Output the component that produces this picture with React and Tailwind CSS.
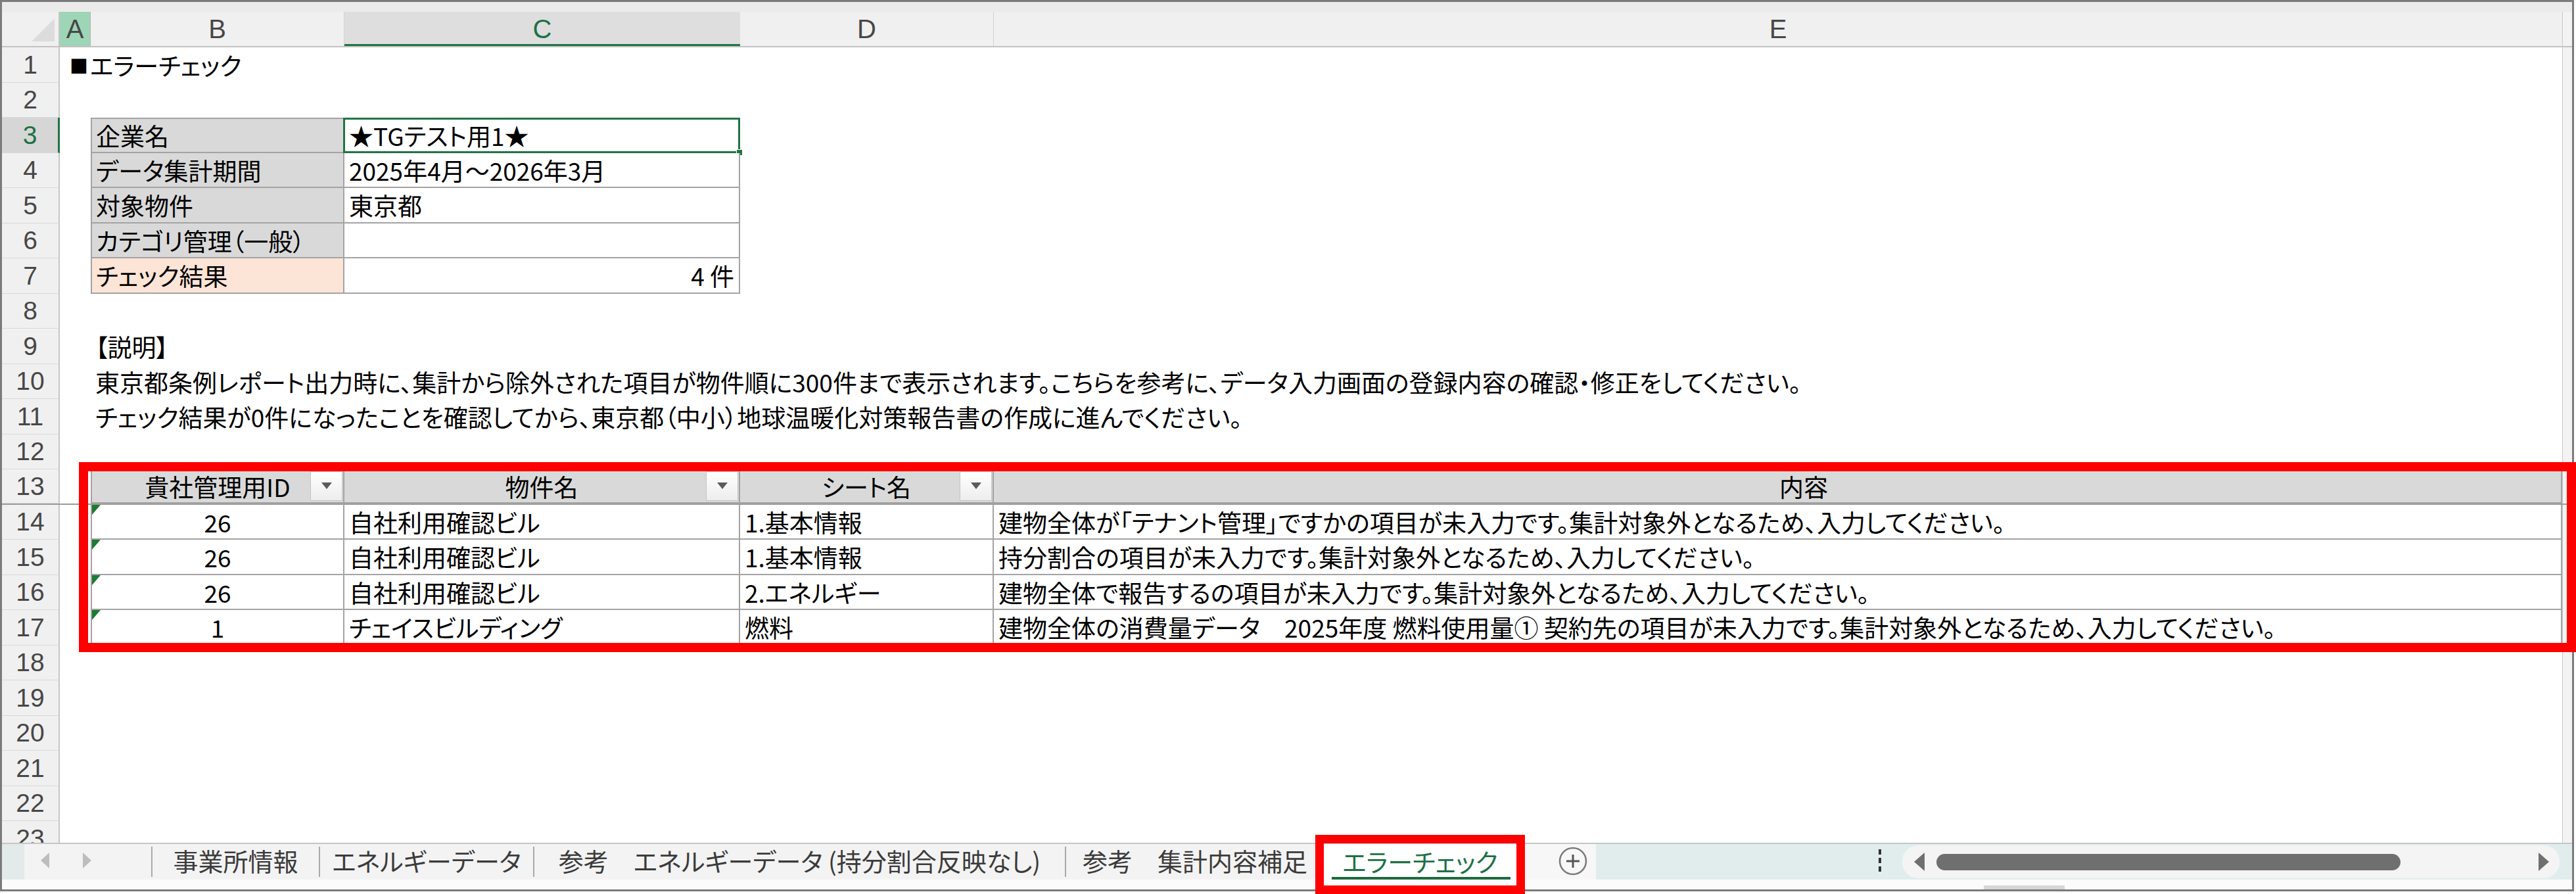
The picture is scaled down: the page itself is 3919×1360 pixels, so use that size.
import React from "react";

const RowHead = ({ n, active }) => (
  <div
    className={`w-[88px] shrink-0 flex items-center justify-center border-b border-b-[#d9d9d9] font-['Liberation_Sans',sans-serif] text-[39px] ${
      active
        ? "bg-[#d6d6d6] text-[#1e7145] border-r-[3px] border-r-[#217346]"
        : "bg-[#f0f0f0] text-[#474747] border-r-2 border-r-[#c6c6c6]"
    }`}
  >
    {n}
  </div>
);

const Row = ({ n, active, freeze, a, b, c, d, e }) => (
  <div
    className={`flex h-[53.5px] shrink-0 ${
      freeze ? "border-b-2 border-[#9c9c9c]" : ""
    }`}
  >
    <RowHead n={n} active={active} />
    {a || <div className="w-[47px] shrink-0" />}
    {b || <div className="w-[386px] shrink-0" />}
    {c || <div className="w-[602px] shrink-0" />}
    {d || <div className="w-[386px] shrink-0" />}
    {e || <div className="w-[2386px] shrink-0" />}
    <div className="flex-1 bg-[#f3f3f3] border-l border-[#c8c8c8]" />
  </div>
);

// info table label / value cells
const Label = ({ children, first, peach }) => (
  <div
    className={`w-[386px] shrink-0 flex items-center pl-[6px] pt-[2px] whitespace-nowrap border-l-2 border-r-2 border-b-2 border-[#a3a3a3] ${
      first ? "border-t-2" : ""
    } ${peach ? "bg-[#fce4d6]" : "bg-[#d9d9d9]"}`}
  >
    {children}
  </div>
);

const Value = ({ children, first, right, selected }) => (
  <div
    className={`w-[602px] shrink-0 relative flex items-center px-[7px] pt-[2px] whitespace-nowrap bg-white border-r-2 border-b-2 border-[#a3a3a3] ${
      first ? "border-t-2" : ""
    } ${right ? "justify-end" : ""}`}
  >
    {children}
    {selected && (
      <>
        <div className="absolute -top-[2px] -left-[2px] -right-[2px] -bottom-[2px] border-[3px] border-[#217346]" />
        <div className="absolute -right-[6px] -bottom-[6px] w-[10px] h-[10px] bg-[#217346] border border-white" />
      </>
    )}
  </div>
);

const Text = ({ w, children, pl = "pl-[7px]" }) => (
  <div className={`${w} shrink-0 flex items-center ${pl} pt-[2px] whitespace-nowrap`}>
    {children}
  </div>
);

const FilterBtn = () => (
  <div className="absolute right-[1px] top-[1px] bottom-[2px] w-[49px] bg-linear-to-b from-white to-[#ededed] border border-[#c4c4c4] flex items-center justify-center">
    <svg width="16" height="10" viewBox="0 0 16 10">
      <polygon points="0,0 16,0 8,10" fill="#5b5b5b" />
    </svg>
  </div>
);

const HeadCell = ({ w, children, filter, first, extra = "" }) => (
  <div
    className={`${w} shrink-0 relative flex items-center justify-center pt-[2px] bg-[#d9d9d9] border-t-2 border-r-2 border-b-2 border-[#a3a3a3] ${
      first ? "border-l-2" : ""
    } ${extra}`}
  >
    {children}
    {filter && <FilterBtn />}
  </div>
);

const IdCell = ({ children }) => (
  <div className="w-[386px] shrink-0 relative flex items-center justify-center pt-[2px] bg-white border-l-2 border-r-2 border-b-2 border-[#a3a3a3]">
    <div className="absolute top-0 left-0 w-0 h-0 border-t-[15px] border-t-[#1c7a33] border-r-[13px] border-r-transparent" />
    {children}
  </div>
);

const DataCell = ({ w, children }) => (
  <div className={`${w} shrink-0 flex items-center pl-[7px] pt-[2px] whitespace-nowrap bg-white border-r-2 border-b-2 border-[#a3a3a3]`}>
    {children}
  </div>
);

const errors = [
  {
    id: "26",
    name: "自社利用確認ビル",
    sheet: "1.基本情報",
    msg: "建物全体が「テナント管理」ですかの項目が未入力です。集計対象外となるため、入力してください。",
  },
  {
    id: "26",
    name: "自社利用確認ビル",
    sheet: "1.基本情報",
    msg: "持分割合の項目が未入力です。集計対象外となるため、入力してください。",
  },
  {
    id: "26",
    name: "自社利用確認ビル",
    sheet: "2.エネルギー",
    msg: "建物全体で報告するの項目が未入力です。集計対象外となるため、入力してください。",
  },
  {
    id: "1",
    name: "チェイスビルディング",
    sheet: "燃料",
    msg: "建物全体の消費量データ　2025年度 燃料使用量① 契約先の項目が未入力です。集計対象外となるため、入力してください。",
  },
];

const Sep = () => <div className="w-[2px] h-[46px] self-center bg-[#a9a9a9] shrink-0" />;

const Tab = ({ w, children }) => (
  <div className={`${w} shrink-0 flex items-center justify-center pb-[4px] whitespace-nowrap text-[38px] text-[#3b3b3b]`}>
    {children}
  </div>
);

export default function App() {
  return (
    <div className="w-[3919px] h-[1360px] relative overflow-hidden bg-white text-black font-['Noto_Sans_CJK_JP',sans-serif] [font-feature-settings:'palt'] text-[37px] leading-none">
      <div className="w-[3916px] h-[1356px] border-[3px] border-[#7b7b7b] flex flex-col">
        {/* band above the column letters */}
        <div className="h-[15px] shrink-0 bg-[#ebebeb]" />

        {/* column header */}
        <div className="flex h-[54px] shrink-0 bg-[#f0f0f0] border-b-2 border-[#c2c2c2] font-['Liberation_Sans',sans-serif] text-[40px] text-[#474747]">
          <div className="w-[88px] shrink-0 flex items-end justify-end pr-[6px] pb-[7px] border-r-2 border-[#c6c6c6]">
            <svg width="35" height="35" viewBox="0 0 35 35">
              <polygon points="0,35 35,35 35,0" fill="#dcdcdc" />
            </svg>
          </div>
          <div className="w-[47px] shrink-0 flex items-center justify-center bg-[#9fd5b7] border-r border-[#b5b5b5]">
            A
          </div>
          <div className="w-[386px] shrink-0 flex items-center justify-center border-r border-[#d2d2d2]">
            B
          </div>
          <div className="w-[602px] shrink-0 flex items-center justify-center pt-[3px] bg-[#dedede] text-[#1e7145] border-b-[3px] border-[#217346]">
            C
          </div>
          <div className="w-[386px] shrink-0 flex items-center justify-center border-r border-[#d2d2d2]">
            D
          </div>
          <div className="w-[2386px] shrink-0 flex items-center justify-center">
            E
          </div>
          <div className="flex-1 bg-[#f3f3f3] border-l border-[#c8c8c8]" />
        </div>

        {/* grid */}
        <div className="h-[1210px] shrink-0 overflow-hidden flex flex-col">
          <Row
            n={1}
            a={
              <Text w="w-[47px]" pl="pl-[15px]">
                <span className="text-[28px] mr-[3px]">■</span>エラーチェック
              </Text>
            }
          />
          <Row n={2} />
          <Row
            n={3}
            active
            b={<Label first>企業名</Label>}
            c={
              <Value first selected>
                ★TGテスト用1★
              </Value>
            }
          />
          <Row n={4} b={<Label>データ集計期間</Label>} c={<Value>2025年4月～2026年3月</Value>} />
          <Row n={5} b={<Label>対象物件</Label>} c={<Value>東京都</Value>} />
          <Row n={6} b={<Label>カテゴリ管理（一般）</Label>} c={<Value />} />
          <Row n={7} b={<Label peach>チェック結果</Label>} c={<Value right>4 件</Value>} />
          <Row n={8} />
          <Row n={9} b={<Text w="w-[386px]">【説明】</Text>} />
          <Row
            n={10}
            b={
              <Text w="w-[386px]">
                東京都条例レポート出力時に、集計から除外された項目が物件順に300件まで表示されます。こちらを参考に、データ入力画面の登録内容の確認・修正をしてください。
              </Text>
            }
          />
          <Row
            n={11}
            b={
              <Text w="w-[386px]">
                チェック結果が0件になったことを確認してから、東京都（中小）地球温暖化対策報告書の作成に進んでください。
              </Text>
            }
          />
          <Row n={12} />
          <Row
            n={13}
            freeze
            b={
              <HeadCell w="w-[386px]" first filter>
                貴社管理用ID
              </HeadCell>
            }
            c={
              <HeadCell w="w-[602px]" filter>
                物件名
              </HeadCell>
            }
            d={
              <HeadCell w="w-[386px]" filter>
                シート名
              </HeadCell>
            }
            e={
              <HeadCell w="w-[2386px]" extra="pl-[80px]">
                内容
              </HeadCell>
            }
          />
          {errors.map((r, i) => (
            <Row
              key={i}
              n={14 + i}
              b={<IdCell>{r.id}</IdCell>}
              c={<DataCell w="w-[602px]">{r.name}</DataCell>}
              d={<DataCell w="w-[386px]">{r.sheet}</DataCell>}
              e={<DataCell w="w-[2386px]">{r.msg}</DataCell>}
            />
          ))}
          {[18, 19, 20, 21, 22, 23].map((n) => (
            <Row key={n} n={n} />
          ))}
        </div>

        {/* sheet tabs */}
        <div className="h-[56px] shrink-0 flex border-t-2 border-[#c6c6c6] bg-[#e1eded]">
          <div className="w-[227px] shrink-0 flex bg-[#f3f3f3]">
            <div className="w-[34px] bg-[#e3eaea]" />
            <div className="flex items-center gap-[51px] pl-[25px] pb-[4px]">
              <svg width="13" height="24" viewBox="0 0 13 24">
                <polygon points="13,0 13,24 0,12" fill="#bdbdbd" />
              </svg>
              <svg width="13" height="24" viewBox="0 0 13 24">
                <polygon points="0,0 0,24 13,12" fill="#bdbdbd" />
              </svg>
            </div>
          </div>
          <div className="flex bg-[#f3f3f3]">
            <Sep />
            <Tab w="w-[253px]">事業所情報</Tab>
            <Sep />
            <Tab w="w-[324px]">エネルギーデータ</Tab>
            <Sep />
            <Tab w="w-[807px]">参考　エネルギーデータ (持分割合反映なし)</Tab>
            <Sep />
            <Tab w="w-[392px]">参考　集計内容補足</Tab>
            <div className="w-[293px] shrink-0 flex flex-col bg-white">
              <div className="flex-1 flex items-center justify-center pt-[2px] text-[38px] text-[#1e7145] whitespace-nowrap">
                エラーチェック
              </div>
              <div className="h-[4px] ml-[12px] mr-[9px] bg-[#1e6b3f]" />
            </div>
            <div className="w-[121px] shrink-0 flex items-center pl-[64px] pb-[2px] bg-[#f7f7f7]">
              <svg width="44" height="44" viewBox="0 0 44 44">
                <circle cx="22" cy="22" r="20" fill="none" stroke="#7a7a7a" strokeWidth="2.5" />
                <line x1="22" y1="12" x2="22" y2="32" stroke="#555" strokeWidth="3" />
                <line x1="12" y1="22" x2="32" y2="22" stroke="#555" strokeWidth="3" />
              </svg>
            </div>
          </div>
          <div className="w-[466px] shrink-0 flex items-center justify-end pr-[32px] pb-[4px]">
            <div className="flex flex-col gap-[5px]">
              <div className="w-[4px] h-[8px] bg-[#333]" />
              <div className="w-[4px] h-[8px] bg-[#333]" />
              <div className="w-[4px] h-[8px] bg-[#333]" />
            </div>
          </div>
          <div className="w-[1000px] shrink-0 my-[2px] rounded-[24px] bg-[#f4f4f4] flex items-center pl-[18px] pr-[16px]">
            <svg width="16" height="28" viewBox="0 0 16 28">
              <polygon points="16,0 16,28 0,14" fill="#6f6f6f" />
            </svg>
            <div className="ml-[18px] w-[706px] h-[25px] rounded-full bg-[#6f6f6f]" />
            <div className="flex-1" />
            <svg width="16" height="28" viewBox="0 0 16 28">
              <polygon points="0,0 0,28 16,14" fill="#6f6f6f" />
            </svg>
          </div>
          <div className="flex-1" />
        </div>

        {/* bottom strip */}
        <div className="h-[15px] shrink-0 flex items-end pl-[3015px] bg-[#fbfbfb]">
          <div className="w-[123px] h-[6px] bg-[#d6d6d6]" />
        </div>
      </div>

      {/* red annotation boxes */}
      <div className="absolute left-[120px] top-[703px] w-[3799px] h-[289px] border-[14px] border-[#ff0000]" />
      <div className="absolute left-[2001px] top-[1270px] w-[319px] h-[90px] border-[13px] border-[#ff0000]" />
    </div>
  );
}
